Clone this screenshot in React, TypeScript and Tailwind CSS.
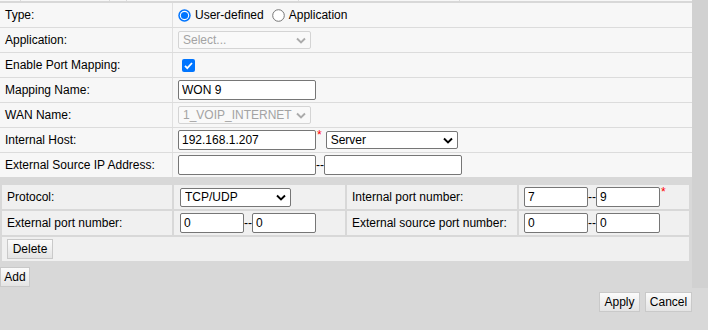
import React from "react";
import clsx from "clsx";

function Sel({ className, text, disabled }: { className?: string; text: string; disabled?: boolean }) {
  return (
    <div
      className={clsx(
        "flex items-center rounded-[2px] border pl-[4px] pr-[4px]",
        disabled ? "border-[#d4d4d4] bg-[#f9f9f9] text-[#a3a3a3]" : "border-[#767676] bg-white text-black",
        className
      )}
    >
      <span className="flex-1 overflow-hidden whitespace-nowrap leading-[15px]">{text}</span>
      <svg width="10" height="7" viewBox="0 0 10 7" className="shrink-0 ml-[2px]">
        <path d="M1 1.5l4 4 4-4" stroke={disabled ? "#ababab" : "#000"} strokeWidth="1.9" fill="none" />
      </svg>
    </div>
  );
}

function Inp({ className, value }: { className?: string; value: string }) {
  return (
    <input
      readOnly
      value={value}
      className={clsx(
        "h-[20px] rounded-[2px] border border-[#767676] bg-white px-[3px] text-[12px] text-black outline-none",
        className
      )}
    />
  );
}

function Star() {
  return <span className="text-[#ff0000] self-start mt-[1px] ml-[1px] leading-none text-[12px]">*</span>;
}

function Btn({ className, label }: { className?: string; label: string }) {
  return (
    <button
      className={clsx(
        "h-[20px] border border-[#c9c9c9] bg-linear-to-b from-[#fbfbfb] to-[#e4e4e4] text-[12px] text-black leading-none",
        className
      )}
    >
      {label}
    </button>
  );
}

function Row({ label, children, last }: { label: string; children?: React.ReactNode; last?: boolean }) {
  return (
    <div className={clsx("flex h-[24px] bg-[#f7f7f7]", !last && "border-b border-[#dcdcdc] h-[25px]")}>
      <div className="w-[173px] shrink-0 border-r border-[#e0e0e0] pl-[5px] flex items-center">{label}</div>
      <div className="flex-1 flex items-center pl-[5px]">{children}</div>
    </div>
  );
}

function Radio({ checked }: { checked?: boolean }) {
  return (
    <svg width="13" height="13" viewBox="0 0 13 13" className="shrink-0">
      {checked ? (
        <>
          <circle cx="6.5" cy="6.5" r="6.2" fill="#0075ff" />
          <circle cx="6.5" cy="6.5" r="4.7" fill="#fff" />
          <circle cx="6.5" cy="6.5" r="3.6" fill="#0075ff" />
        </>
      ) : (
        <circle cx="6.5" cy="6.5" r="5.8" fill="#fff" stroke="#767676" strokeWidth="1" />
      )}
    </svg>
  );
}

function Cell({ children, className }: { children?: React.ReactNode; className?: string }) {
  return <div className={clsx("h-[24px] bg-[#f0f0f0] flex items-center pl-[5px]", className)}>{children}</div>;
}

export default function App() {
  return (
    <div className="w-[708px] h-[330px] overflow-hidden bg-[#d8d8d8] text-[12px] text-black font-['Liberation_Sans',Arial,sans-serif]">
      <div className="flex h-[288px]">
        <div className="w-[692px] flex flex-col">
          <div className="flex h-[1px] bg-[#f7f7f7]">
            <div className="w-[21px] border-r border-[#dcdcdc]" />
            <div className="w-[89px] border-r border-[#dcdcdc]" />
            <div className="w-[17px] border-r border-[#dcdcdc]" />
            <div className="w-[172px] border-r border-[#dcdcdc]" />
            <div className="w-[161px] border-r border-[#dcdcdc]" />
            <div className="flex-1" />
          </div>
          <div className="h-[2px]" />
          <Row label="Type:">
            <Radio checked />
            <span className="ml-[4px]">User-defined</span>
            <span className="ml-[8px]">
              <Radio />
            </span>
            <span className="ml-[4px]">Application</span>
          </Row>
          <Row label="Application:">
            <Sel disabled text="Select..." className="w-[133px] h-[18px]" />
          </Row>
          <Row label="Enable Port Mapping:">
            <div className="ml-[4px] w-[13px] h-[13px] rounded-[2px] bg-[#0075ff] flex items-center justify-center">
              <svg width="11" height="11" viewBox="0 0 11 11">
                <path d="M2 5.8l2.3 2.3L9 3" stroke="#fff" strokeWidth="1.8" fill="none" />
              </svg>
            </div>
          </Row>
          <Row label="Mapping Name:">
            <Inp value="WON 9" className="w-[138px]" />
          </Row>
          <Row label="WAN Name:">
            <Sel disabled text="1_VOIP_INTERNET" className="w-[133px] h-[18px]" />
          </Row>
          <Row label="Internal Host:">
            <Inp value="192.168.1.207" className="w-[138px]" />
            <Star />
            <Sel text="Server" className="ml-[4px] w-[132px] h-[18px]" />
          </Row>
          <Row label="External Source IP Address:" last>
            <Inp value="" className="w-[138px]" />
            <span>--</span>
            <Inp value="" className="w-[138px]" />
          </Row>

          <div className="mt-[6px] grid grid-cols-[170px_171px_170px_170px] gap-[2px] p-[2px] w-[691px]">
            <Cell>Protocol:</Cell>
            <Cell className="pl-[6px]">
              <Sel text="TCP/UDP" className="w-[111px] h-[19px]" />
            </Cell>
            <Cell>Internal port number:</Cell>
            <Cell>
              <Inp value="7" className="w-[64px]" />
              <span>--</span>
              <Inp value="9" className="w-[64px]" />
              <Star />
            </Cell>
            <Cell>External port number:</Cell>
            <Cell className="pl-[6px]">
              <Inp value="0" className="w-[64px]" />
              <span>--</span>
              <Inp value="0" className="w-[64px]" />
            </Cell>
            <Cell>External source port number:</Cell>
            <Cell>
              <Inp value="0" className="w-[64px]" />
              <span>--</span>
              <Inp value="0" className="w-[64px]" />
            </Cell>
            <Cell className="col-span-4">
              <Btn label="Delete" className="w-[46px]" />
            </Cell>
          </div>
          <div className="mt-[4px]">
            <Btn label="Add" className="w-[30px]" />
          </div>
        </div>
        <div className="w-[16px] bg-[#d1d1d1]" />
      </div>
      <div className="flex justify-end gap-[5px] pr-[16px] pt-[4px]">
        <Btn label="Apply" className="w-[41px]" />
        <Btn label="Cancel" className="w-[47px]" />
      </div>
    </div>
  );
}
